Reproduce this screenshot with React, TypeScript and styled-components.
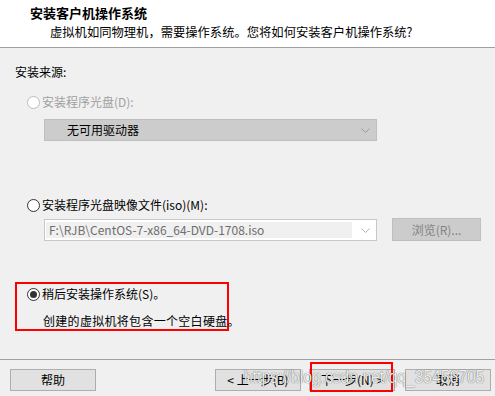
import React from "react";
import styled, { createGlobalStyle } from "styled-components";

const Global = createGlobalStyle`
  html, body { margin: 0; padding: 0; background: #f0f0f0; }
  body {
    font-family: "Noto Sans CJK SC", "Noto Sans", sans-serif;
    font-size: 12px;
    color: #000;
  }
  * { box-sizing: border-box; }
`;

const Window = styled.div`
  position: relative;
  width: 495px;
  height: 396px;
  display: flex;
  flex-direction: column;
  background: #f0f0f0;
  overflow: hidden;
`;

const Header = styled.header`
  height: 48px;
  flex: none;
  background: #fff;
  border-bottom: 1px solid #a0a0a0;
  padding: 5px 0 0 30px;
  display: flex;
  flex-direction: column;
`;

const Title = styled.h1`
  margin: 0;
  font-size: 13px;
  font-weight: 700;
  line-height: 16px;
`;

const Subtitle = styled.p`
  margin: 3px 0 0 20px;
  font-size: 12.3px;
  line-height: 16px;
`;

const Body = styled.main`
  flex: 1;
  padding: 16px 0 0 15px;
  display: flex;
  flex-direction: column;
`;

const SectionLabel = styled.div`
  line-height: 16px;
  height: 16px;
`;

const RadioRow = styled.label<{ $disabled?: boolean; $top: number; $left?: number }>`
  display: flex;
  align-items: center;
  gap: 2px;
  height: 16px;
  line-height: 16px;
  margin-top: ${(p) => p.$top}px;
  margin-left: ${(p) => (p.$left ?? 12)}px;
  color: ${(p) => (p.$disabled ? "#a0a0a0" : "#000")};
  white-space: nowrap;
`;

const RadioCircle = styled.span<{ $disabled?: boolean; $checked?: boolean }>`
  flex: none;
  width: 13px;
  height: 13px;
  border-radius: 50%;
  border: 1px solid ${(p) => (p.$disabled ? "#bcbcbc" : "#333")};
  background: #fff;
  display: flex;
  align-items: center;
  justify-content: center;
  &::after {
    content: "";
    width: 7px;
    height: 7px;
    border-radius: 50%;
    background: #333;
    display: ${(p) => (p.$checked ? "block" : "none")};
  }
`;

const Select = styled.div<{ $top: number }>`
  margin: ${(p) => p.$top}px 0 0 29px;
  width: 333px;
  height: 22px;
  background: #cccccc;
  border: 1px solid #bfbfbf;
  display: flex;
  align-items: center;
  padding: 0 6px 0 22px;
  line-height: 16px;
`;

const SelectText = styled.span`
  flex: 1;
`;

const ComboRow = styled.div`
  margin: 5px 0 0 29px;
  display: flex;
  align-items: flex-start;
  gap: 15px;
`;

const Combo = styled.div`
  width: 333px;
  height: 22px;
  margin-top: 1px;
  background: #fff;
  border: 1px solid #c8c8c8;
  display: flex;
  align-items: stretch;
  padding: 2px 6px 2px 1px;
`;

const ComboField = styled.div`
  flex: 1;
  background: #f0f0f0;
  color: #6d6d6d;
  padding-left: 3px;
  line-height: 16px;
  white-space: nowrap;
  overflow: hidden;
  margin-right: 9px;
`;

const ChevronBox = styled.span`
  display: flex;
  align-items: center;
  color: #a6a6a6;
`;

const BrowseButton = styled.button`
  width: 89px;
  height: 23px;
  background: #cccccc;
  border: 1px solid #bfbfbf;
  color: #838383;
  font: inherit;
  font-size: 12px;
  line-height: 16px;
  padding: 0;
`;

const Highlight = styled.div`
  margin-top: 41px;
  width: 214px;
  height: 49px;
  border: 2px solid #ff0000;
  padding: 2px 0 0 10px;
  display: flex;
  flex-direction: column;
`;

const Note = styled.div`
  margin: 11px 0 0 16px;
  line-height: 16px;
  white-space: nowrap;
  letter-spacing: 0.3px;
`;

const Footer = styled.footer`
  position: relative;
  flex: none;
  height: 37px;
  border-top: 1px solid #a0a0a0;
  padding: 9px 4px 0 10px;
  display: flex;
  align-items: flex-start;
`;

const Button = styled.button<{ $gap?: string; $annotated?: boolean }>`
  position: relative;
  width: 86px;
  height: 22px;
  margin-left: ${(p) => p.$gap ?? "0"};
  background: #e1e1e1;
  border: 1px solid #adadad;
  color: #000;
  font: inherit;
  font-size: 12px;
  line-height: 16px;
  padding: 0;
  white-space: nowrap;
  &::after {
    content: "";
    display: ${(p) => (p.$annotated ? "block" : "none")};
    position: absolute;
    top: -8px;
    left: 0;
    right: 1px;
    bottom: -2px;
    border: 2px solid #ff0000;
  }
`;

const Watermark = styled.div`
  position: absolute;
  left: 244px;
  top: 367px;
  font-family: "Liberation Sans", Arial, sans-serif;
  font-size: 18px;
  line-height: 20px;
  color: rgba(255, 255, 255, 0.92);
  text-shadow: 0 0 1px rgba(0, 0, 0, 0.55), 0 0 1px rgba(0, 0, 0, 0.3);
  transform: scaleX(0.87);
  transform-origin: left center;
  white-space: nowrap;
  pointer-events: none;
`;

const Chevron = ({ color }: { color: string }) => (
  <svg width="9" height="5" viewBox="0 0 9 5" fill="none">
    <path d="M0.5 0.5 L4.5 4.5 L8.5 0.5" stroke={color} strokeWidth="1" />
  </svg>
);

export default function App() {
  return (
    <>
      <Global />
      <Window>
        <Header>
          <Title>安装客户机操作系统</Title>
          <Subtitle>虚拟机如同物理机，需要操作系统。您将如何安装客户机操作系统?</Subtitle>
        </Header>
        <Body>
          <SectionLabel>安装来源:</SectionLabel>

          <RadioRow $disabled $top={14}>
            <RadioCircle $disabled />
            安装程序光盘(D):
          </RadioRow>
          <Select $top={9}>
            <SelectText>无可用驱动器</SelectText>
            <ChevronBox>
              <Chevron color="#9a9a9a" />
            </ChevronBox>
          </Select>

          <RadioRow $top={56}>
            <RadioCircle />
            安装程序光盘映像文件(iso)(M):
          </RadioRow>
          <ComboRow>
            <Combo>
              <ComboField>F:\RJB\CentOS-7-x86_64-DVD-1708.iso</ComboField>
              <ChevronBox>
                <Chevron color="#b4b4b4" />
              </ChevronBox>
            </Combo>
            <BrowseButton>浏览(R)...</BrowseButton>
          </ComboRow>

          <Highlight>
            <RadioRow $top={0} $left={0}>
              <RadioCircle $checked />
              稍后安装操作系统(S)。
            </RadioRow>
            <Note>创建的虚拟机将包含一个空白硬盘。</Note>
          </Highlight>
        </Body>
        <Footer>
          <Button>帮助</Button>
          <Button $gap="auto">&lt; 上一步(B)</Button>
          <Button $gap="8px" $annotated>
            下一步(N) &gt;
          </Button>
          <Button $gap="10px">取消</Button>
        </Footer>
        <Watermark>https://blog.csdn.net/qq_35456705</Watermark>
      </Window>
    </>
  );
}
